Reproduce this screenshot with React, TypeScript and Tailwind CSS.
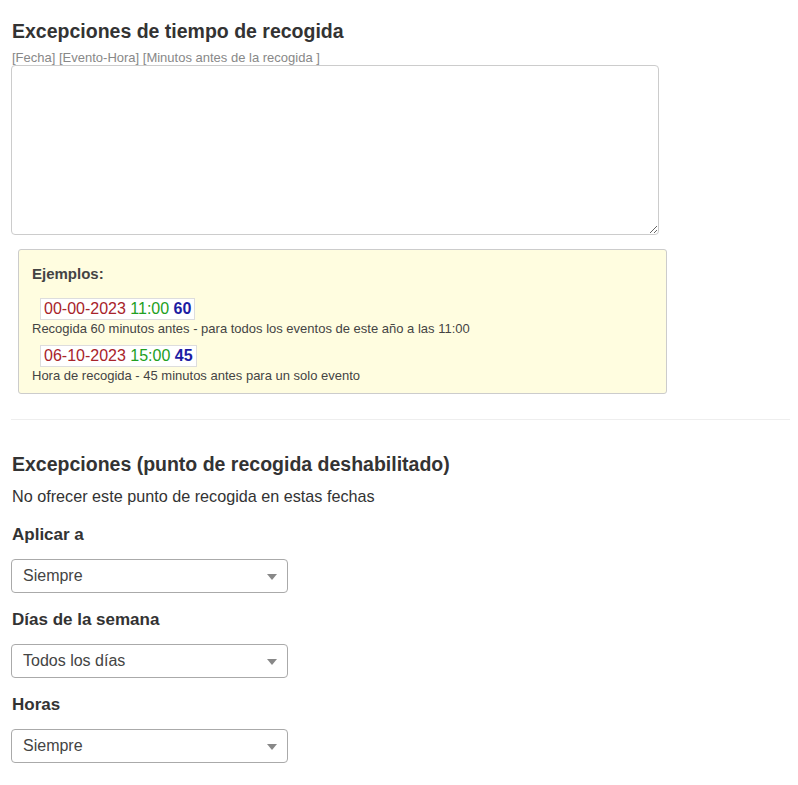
import React from "react";

const font = { fontFamily: '"Liberation Sans", Arial, sans-serif' };

function Chip({ d, t, n }: { d: string; t: string; n: string }) {
  return (
    <div className="ml-[8px] inline-block h-[22px] border border-[#dddddd] bg-white px-[3px] text-[16px] leading-[20px] whitespace-nowrap">
      <span className="text-[#a8232a]">{d}</span>{" "}
      <span className="text-[#22a022]">{t}</span>{" "}
      <span className="font-bold text-[#1c1ca3]">{n}</span>
    </div>
  );
}

function Select({ value }: { value: string }) {
  return (
    <div className="flex h-[34px] w-[277px] items-center justify-between rounded-[4px] border border-[#aaaaaa] bg-white pl-[11px] pr-[10px]">
      <span className="text-[16px] leading-[20px] text-[#444444]">{value}</span>
      <svg width="10" height="6" viewBox="0 0 10 6" className="mt-[1px]">
        <path d="M0 0 L10 0 L5 6 Z" fill="#888888" />
      </svg>
    </div>
  );
}

export default function App() {
  return (
    <div className="min-h-[785px] bg-white pl-[11px] pr-[8px] pt-[20px] text-[#333333]" style={font}>
      <h3 className="pl-[1px] text-[19.5px] font-bold leading-[22px]">Excepciones de tiempo de recogida</h3>
      <div className="mt-[9px] pl-[1px] text-[13px] leading-[14px] text-[#888888]">
        [Fecha] [Evento-Hora] [Minutos antes de la recogida ]
      </div>
      <textarea className="block h-[170px] w-[648px] rounded-[4px] border border-[#cccccc] bg-white outline-none" />
      <div className="ml-[7px] mt-[14px] w-[649px] rounded-[3px] border border-[#cccccc] bg-[#fffde0] pl-[13px] pt-[13px] pb-[10px] text-[#444444]">
        <div className="text-[15px] font-bold leading-[22px]">Ejemplos:</div>
        <div className="mt-[12px]">
          <Chip d="00-00-2023" t="11:00" n="60" />
        </div>
        <div className="text-[13px] leading-[15px]">Recogida 60 minutos antes - para todos los eventos de este año a las 11:00</div>
        <div className="mt-[8px]">
          <Chip d="06-10-2023" t="15:00" n="45" />
        </div>
        <div className="text-[13px] leading-[15px]">Hora de recogida - 45 minutos antes para un solo evento</div>
      </div>
      <div className="mt-[25px] h-px w-full bg-[#eeeeee]" />
      <h3 className="mt-[33px] pl-[1px] text-[19.5px] font-bold leading-[22px]">Excepciones (punto de recogida deshabilitado)</h3>
      <p className="mt-[10px] pl-[1px] text-[16.2px] leading-[22px]">No ofrecer este punto de recogida en estas fechas</p>
      <div className="mt-[17px] pl-[1px] text-[17px] font-bold leading-[22px]">Aplicar a</div>
      <div className="mt-[13px]">
        <Select value="Siempre" />
      </div>
      <div className="mt-[16px] pl-[1px] text-[17px] font-bold leading-[22px]">Días de la semana</div>
      <div className="mt-[13px]">
        <Select value="Todos los días" />
      </div>
      <div className="mt-[16px] pl-[1px] text-[17px] font-bold leading-[22px]">Horas</div>
      <div className="mt-[13px]">
        <Select value="Siempre" />
      </div>
    </div>
  );
}
